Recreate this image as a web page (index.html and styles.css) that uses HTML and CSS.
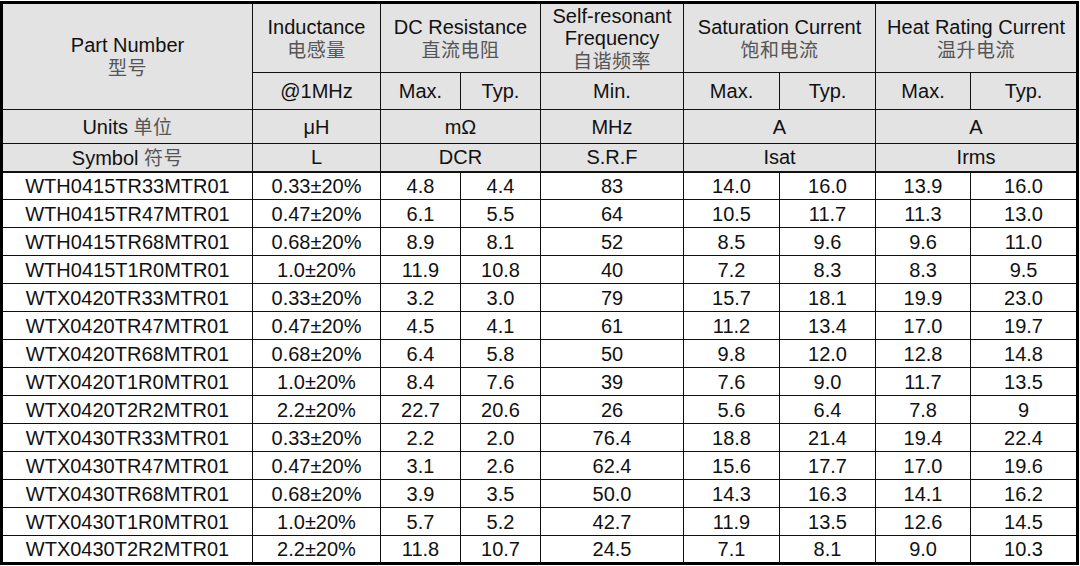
FILE: index.html
```html
<!DOCTYPE html>
<html lang="en">
<head>
<meta charset="utf-8">
<title>Inductor specifications</title>
<link rel="stylesheet" href="styles.css">
</head>
<body>
<table class="spec">
  <colgroup>
    <col class="c-part">
    <col class="c-ind">
    <col class="c-dc">
    <col class="c-dc">
    <col class="c-srf">
    <col class="c-sat1">
    <col class="c-sat2">
    <col class="c-heat1">
    <col class="c-heat2">
  </colgroup>
  <thead>
    <tr class="h1">
      <th rowspan="2">Part Number<br><span class="zh">型号</span></th>
      <th>Inductance<br><span class="zh">电感量</span></th>
      <th colspan="2">DC Resistance<br><span class="zh">直流电阻</span></th>
      <th>Self-resonant<br>Frequency<br><span class="zh">自谐频率</span></th>
      <th colspan="2">Saturation Current<br><span class="zh">饱和电流</span></th>
      <th colspan="2">Heat Rating Current<br><span class="zh">温升电流</span></th>
    </tr>
    <tr class="h2">
      <th>@1MHz</th>
      <th>Max.</th>
      <th>Typ.</th>
      <th>Min.</th>
      <th>Max.</th>
      <th>Typ.</th>
      <th>Max.</th>
      <th>Typ.</th>
    </tr>
    <tr class="h3">
      <th>Units <span class="zh">单位</span></th>
      <th>μH</th>
      <th colspan="2">mΩ</th>
      <th>MHz</th>
      <th colspan="2">A</th>
      <th colspan="2">A</th>
    </tr>
    <tr class="h4">
      <th>Symbol <span class="zh">符号</span></th>
      <th>L</th>
      <th colspan="2">DCR</th>
      <th>S.R.F</th>
      <th colspan="2">Isat</th>
      <th colspan="2">Irms</th>
    </tr>
  </thead>
  <tbody>
    <tr><td>WTH0415TR33MTR01</td><td>0.33±20%</td><td>4.8</td><td>4.4</td><td>83</td><td>14.0</td><td>16.0</td><td>13.9</td><td>16.0</td></tr>
    <tr><td>WTH0415TR47MTR01</td><td>0.47±20%</td><td>6.1</td><td>5.5</td><td>64</td><td>10.5</td><td>11.7</td><td>11.3</td><td>13.0</td></tr>
    <tr><td>WTH0415TR68MTR01</td><td>0.68±20%</td><td>8.9</td><td>8.1</td><td>52</td><td>8.5</td><td>9.6</td><td>9.6</td><td>11.0</td></tr>
    <tr><td>WTH0415T1R0MTR01</td><td>1.0±20%</td><td>11.9</td><td>10.8</td><td>40</td><td>7.2</td><td>8.3</td><td>8.3</td><td>9.5</td></tr>
    <tr><td>WTX0420TR33MTR01</td><td>0.33±20%</td><td>3.2</td><td>3.0</td><td>79</td><td>15.7</td><td>18.1</td><td>19.9</td><td>23.0</td></tr>
    <tr><td>WTX0420TR47MTR01</td><td>0.47±20%</td><td>4.5</td><td>4.1</td><td>61</td><td>11.2</td><td>13.4</td><td>17.0</td><td>19.7</td></tr>
    <tr><td>WTX0420TR68MTR01</td><td>0.68±20%</td><td>6.4</td><td>5.8</td><td>50</td><td>9.8</td><td>12.0</td><td>12.8</td><td>14.8</td></tr>
    <tr><td>WTX0420T1R0MTR01</td><td>1.0±20%</td><td>8.4</td><td>7.6</td><td>39</td><td>7.6</td><td>9.0</td><td>11.7</td><td>13.5</td></tr>
    <tr><td>WTX0420T2R2MTR01</td><td>2.2±20%</td><td>22.7</td><td>20.6</td><td>26</td><td>5.6</td><td>6.4</td><td>7.8</td><td>9</td></tr>
    <tr><td>WTX0430TR33MTR01</td><td>0.33±20%</td><td>2.2</td><td>2.0</td><td>76.4</td><td>18.8</td><td>21.4</td><td>19.4</td><td>22.4</td></tr>
    <tr><td>WTX0430TR47MTR01</td><td>0.47±20%</td><td>3.1</td><td>2.6</td><td>62.4</td><td>15.6</td><td>17.7</td><td>17.0</td><td>19.6</td></tr>
    <tr><td>WTX0430TR68MTR01</td><td>0.68±20%</td><td>3.9</td><td>3.5</td><td>50.0</td><td>14.3</td><td>16.3</td><td>14.1</td><td>16.2</td></tr>
    <tr><td>WTX0430T1R0MTR01</td><td>1.0±20%</td><td>5.7</td><td>5.2</td><td>42.7</td><td>11.9</td><td>13.5</td><td>12.6</td><td>14.5</td></tr>
    <tr><td>WTX0430T2R2MTR01</td><td>2.2±20%</td><td>11.8</td><td>10.7</td><td>24.5</td><td>7.1</td><td>8.1</td><td>9.0</td><td>10.3</td></tr>
  </tbody>
</table>
</body>
</html>
```

FILE: styles.css
```css
html, body {
  margin: 0;
  padding: 0;
  background: #ffffff;
}

body {
  padding-top: 1px;
}

.spec {
  border-collapse: collapse;
  table-layout: fixed;
  width: 1079px;
  border: 3px solid #000;
  font-family: "Liberation Sans", Arial, "Noto Sans CJK SC", sans-serif;
  font-size: 20px;
  color: #111;
}

.c-part { width: 251px; }
.c-ind { width: 128px; }
.c-dc { width: 80px; }
.c-srf { width: 143px; }
.c-sat1 { width: 96px; }
.c-sat2 { width: 96px; }
.c-heat1 { width: 95px; }
.c-heat2 { width: 107px; }

.spec th,
.spec td {
  border: 1px solid #111;
  padding: 0;
  text-align: center;
  vertical-align: middle;
  line-height: 22px;
  white-space: nowrap;
}

.spec th {
  background: #e3e3e3;
  font-weight: normal;
}

.spec td {
  background: #ffffff;
}

.h1 { height: 70px; }
.h2 { height: 37px; }
.h3 { height: 34px; }
.h4 { height: 28px; }

.h4 th {
  border-bottom: 2px solid #111;
}

.spec tbody tr {
  height: 28px;
}

.zh {
  font-family: "Noto Sans CJK SC", sans-serif;
  font-size: 19px;
  letter-spacing: 0.5px;
  color: #555;
}
```
